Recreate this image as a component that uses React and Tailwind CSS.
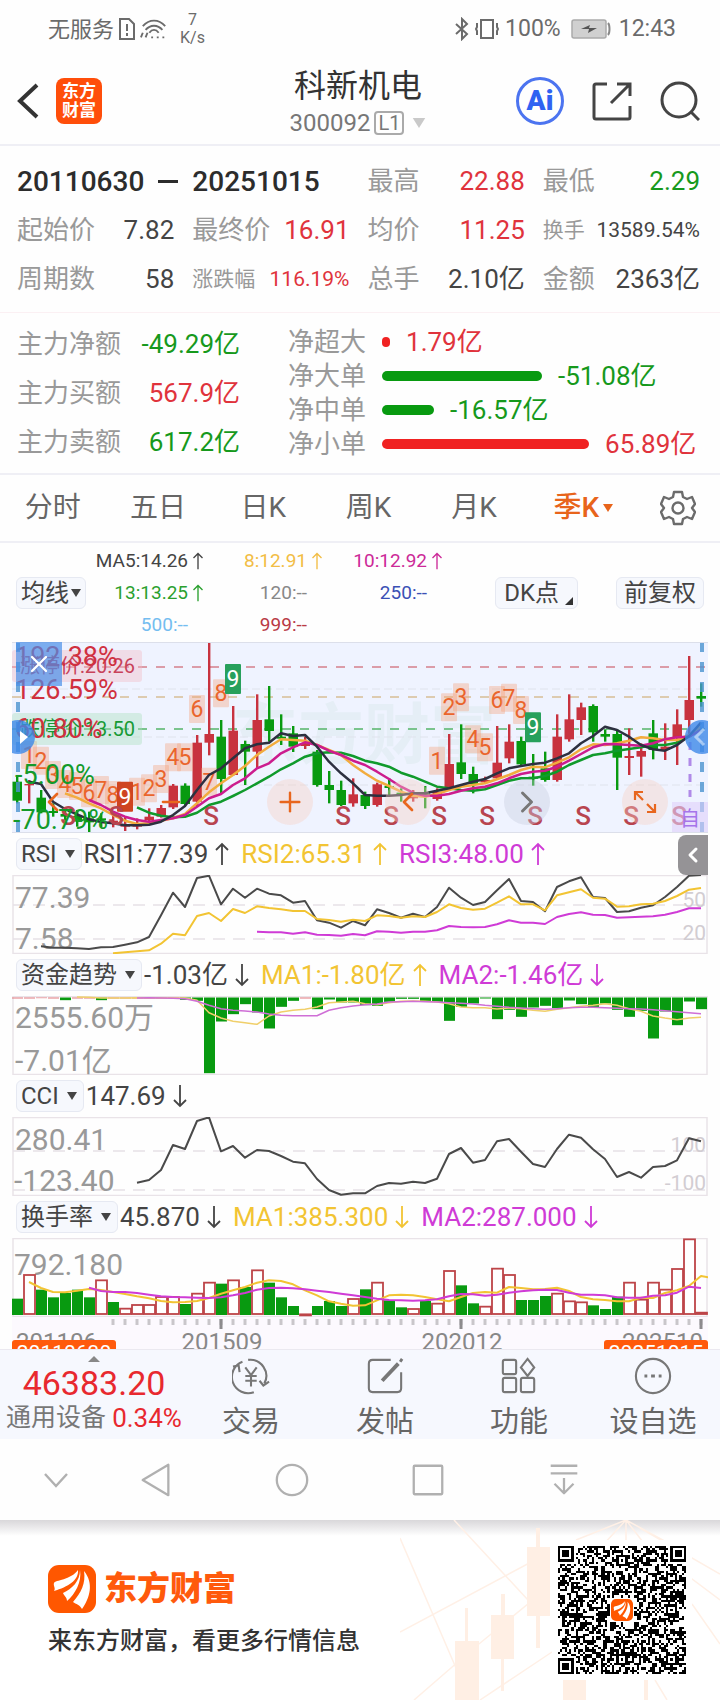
import { ChevronLeft, ChevronRight, Plus, Minus, X } from "lucide-react";

const GREEN = "#089a10";
const RED = "#c8323f";
const YELLOW = "#f2c433";
const PURPLE = "#cf3bd6";

// chart data is kept at 3 units per pixel, one column every 12px
const STEP = 12;
const cx = (i) => 5 + STEP * i;

const toPoints = (values, start, top) =>
  values.map((v, i) => `${cx(start + i)},${((v - top) / 3).toFixed(1)}`).join(" ");

function Line({ values, start, top, color, width = 2 }) {
  return <polyline points={toPoints(values, start, top)} fill="none" stroke={color} strokeWidth={width} strokeLinejoin="round" />;
}

// [up, high, open/close top, open/close bottom, low]
const candles = [
  [0, 437, 455, 512, 520], [1, 450, 462, 466, 520], [0, 480, 503, 547, 550], [0, 520, 543, 549, 560],
  [0, 535, 552, 560, 572], [0, 540, 558, 575, 590], [0, 545, 565, 577, 607], [0, 550, 565, 571, 592],
  [1, 545, 572, 578, 592], [1, 560, 584, 590, 603], [1, 565, 584, 590, 598], [1, 535, 560, 570, 575],
  [1, 525, 534, 560, 563], [1, 462, 467, 532, 537], [0, 460, 467, 522, 525], [1, 315, 338, 515, 530],
  [1, 36, 312, 338, 376], [0, 270, 320, 447, 490], [1, 228, 302, 435, 437], [0, 332, 342, 365, 465],
  [1, 193, 270, 365, 415], [0, 168, 268, 303, 335], [0, 253, 320, 326, 345], [0, 288, 310, 350, 366],
  [1, 320, 340, 348, 357], [0, 360, 365, 465, 470], [0, 423, 465, 480, 520], [0, 452, 480, 525, 528],
  [1, 445, 493, 520, 530], [0, 485, 495, 528, 537], [1, 458, 463, 525, 530], [0, 445, 468, 474, 495],
  [0, 475, 488, 495, 515], [1, 480, 500, 505, 515], [0, 468, 490, 497, 535], [1, 475, 485, 507, 512],
  [1, 312, 402, 475, 480], [0, 283, 397, 432, 447], [0, 410, 432, 462, 490], [1, 440, 450, 457, 462],
  [1, 288, 398, 445, 450], [1, 283, 335, 385, 400], [0, 320, 333, 403, 405], [0, 372, 440, 446, 467],
  [0, 365, 415, 450, 455], [1, 253, 320, 450, 455], [1, 193, 268, 328, 335], [1, 218, 232, 270, 315],
  [0, 223, 228, 307, 335], [0, 298, 312, 320, 335], [0, 298, 312, 383, 480], [1, 295, 378, 384, 435],
  [1, 340, 363, 380, 440], [0, 270, 310, 360, 388], [1, 280, 350, 360, 390], [1, 238, 283, 322, 405],
  [1, 78, 210, 270, 320], [0, 160, 198, 206, 230],
];

const ma5 = [455, 462, 515, 537, 553, 568, 576, 580, 586, 586, 584, 575, 555, 528, 480, 435, 415, 385, 355, 343, 338, 310, 318, 315, 350, 395, 430, 460, 495, 497, 497, 495, 490, 490, 482, 475, 465, 455, 447, 430, 415, 408, 402, 398, 385, 370, 340, 318, 290, 300, 320, 345, 358, 362, 345, 318, 278];
const ma8 = [490, 503, 520, 535, 555, 572, 582, 580, 572, 565, 552, 520, 487, 460, 435, 408, 375, 350, 328, 330, 332, 345, 360, 375, 405, 430, 452, 468, 485, 497, 500, 492, 480, 470, 465, 460, 448, 435, 420, 410, 412, 398, 382, 358, 343, 345, 340, 332, 322, 325, 330, 330, 315, 290];
const ma10 = [510, 525, 545, 560, 570, 575, 570, 565, 555, 530, 505, 492, 465, 445, 415, 400, 370, 352, 337, 345, 362, 375, 392, 405, 425, 447, 470, 488, 497, 497, 492, 482, 475, 470, 460, 445, 432, 425, 422, 410, 392, 372, 352, 342, 343, 345, 347, 340, 328, 322, 320, 300];
const ma13 = [532, 548, 557, 562, 560, 548, 525, 515, 498, 480, 460, 440, 418, 400, 380, 370, 367, 368, 378, 392, 400, 410, 428, 440, 455, 470, 475, 480, 482, 478, 465, 452, 445, 445, 438, 425, 405, 390, 375, 370, 362, 357, 352, 345, 345, 338, 320, 295];

// nine-turn counters: [digit, column, centre y]
const counters = [
  [1, 1, 375], [2, 2, 392], [3, 3, 435], [4, 4, 462], [5, 5, 468], [6, 6, 490], [7, 7, 480], [8, 8, 495],
  [1, 10, 485], [2, 11, 475], [3, 12, 447], [4, 13, 382], [5, 14, 382], [6, 15, 237], [7, 16, 455], [8, 17, 190],
  [1, 35, 392], [2, 36, 232], [3, 37, 202], [4, 38, 328], [5, 39, 352], [6, 40, 210], [7, 41, 203], [8, 42, 240],
];
const nines = [[9, 500, "#cf4420"], [18, 147, "#27a05c"], [43, 292, "#27a05c"]];
const sells = [56, 104, 199, 331, 379, 427, 475, 523, 571, 619, 667];

const rsi1 = [348, 352, 352, 354, 356, 351, 350, 343, 336, 320, 255, 187, 230, 143, 136, 222, 175, 202, 175, 190, 195, 217, 212, 270, 277, 292, 272, 285, 237, 248, 262, 250, 260, 230, 172, 202, 224, 215, 180, 146, 212, 215, 243, 170, 153, 141, 200, 203, 245, 243, 232, 225, 200, 170, 136, 134];
const rsi2 = [369, 366, 363, 360, 340, 310, 315, 257, 248, 272, 236, 248, 228, 233, 237, 242, 242, 266, 269, 274, 268, 272, 255, 257, 262, 258, 260, 245, 222, 233, 238, 235, 217, 198, 222, 222, 240, 195, 186, 177, 202, 205, 229, 228, 222, 220, 212, 197, 178, 173];
const rsi3 = [304, 306, 306, 310, 306, 313, 314, 316, 311, 315, 303, 304, 307, 304, 304, 300, 287, 290, 291, 290, 282, 270, 277, 277, 281, 260, 251, 246, 253, 254, 262, 261, 259, 258, 253, 245, 234, 234];

const fundBars = [508, 508, 507, 508, 513, 508, 508, 513, 508, 508, 508, 508, 508, 508, 512, 515, 732, 577, 555, 525, 550, 598, 533, 515, 508, 540, 511, 520, 520, 528, 530, 518, 509, 509, 518, 518, 575, 533, 523, 508, 570, 542, 563, 535, 530, 537, 514, 525, 535, 523, 542, 563, 545, 628, 547, 588, 517, 540];
const fundRed = [0, 1, 2, 3, 5, 6, 8, 9, 10, 11, 12, 13, 24];
const fundMa1 = [505, 506, 508, 508, 508, 507, 508, 508, 508, 508, 515, 552, 568, 578, 582, 587, 562, 550, 545, 542, 535, 522, 520, 518, 525, 528, 522, 518, 517, 518, 520, 525, 535, 537, 537, 541, 538, 540, 545, 548, 542, 537, 533, 530, 525, 530, 540, 548, 562, 568, 573, 568, 566];
const fundMa2 = [508, 507, 508, 509, 510, 518, 530, 540, 545, 547, 550, 556, 560, 561, 561, 561, 545, 537, 532, 528, 526, 520, 519, 518, 519, 520, 522, 524, 526, 530, 533, 536, 538, 540, 542, 540, 537, 536, 536, 537, 539, 540, 541, 543, 546, 549, 552, 555];

const cci = [308, 300, 270, 195, 207, 123, 112, 214, 198, 233, 210, 213, 228, 245, 250, 297, 330, 344, 340, 340, 318, 309, 311, 305, 309, 296, 222, 204, 248, 240, 184, 177, 215, 252, 261, 207, 164, 173, 208, 237, 291, 276, 293, 261, 258, 241, 175, 184];

const turnTops = [660, 586, 633, 656, 643, 633, 656, 602, 670, 687, 676, 676, 652, 652, 676, 642, 609, 615, 602, 625, 572, 612, 656, 682, 704, 682, 667, 682, 658, 632, 609, 665, 686, 688, 667, 672, 574, 620, 674, 681, 567, 586, 664, 664, 652, 642, 665, 668, 680, 691, 654, 609, 660, 609, 630, 568, 479, 699];
const turnGreen = [0, 2, 3, 4, 5, 6, 8, 14, 17, 19, 21, 22, 23, 25, 26, 27, 29, 31, 32, 34, 37, 38, 42, 43, 44, 48, 49, 50];
const turnMa1 = [610, 628, 640, 641, 636, 631, 634, 640, 646, 653, 659, 667, 671, 670, 667, 658, 645, 635, 625, 612, 605, 607, 617, 635, 650, 668, 675, 681, 680, 665, 650, 648, 650, 655, 662, 668, 655, 643, 640, 642, 625, 628, 632, 631, 627, 637, 655, 662, 664, 668, 668, 657, 658, 643, 635, 622, 592, 598];
const turnMa2 = [627, 637, 640, 640, 643, 648, 653, 655, 656, 657, 658, 656, 650, 643, 633, 628, 627, 629, 632, 636, 640, 645, 650, 655, 660, 664, 665, 666, 665, 662, 653, 646, 647, 651, 648, 642, 638, 635, 633, 634, 642, 648, 648, 650, 656, 657, 657, 651, 650, 642, 624, 628];

function Arrow({ down = false, className = "h-6 w-3.5" }) {
  return (
    <svg viewBox="0 0 14 24" className={className} fill="none" stroke="currentColor" strokeWidth="1.8">
      {down ? <path d="M7 1v21M1 16l6 6 6-6" /> : <path d="M7 23V2M1 8l6-6 6 6" />}
    </svg>
  );
}

function Caret({ className = "h-2 w-2.5" }) {
  return (
    <svg viewBox="0 0 10 8" className={className} fill="currentColor">
      <path d="M0 0h10L5 8z" />
    </svg>
  );
}

function StatusBar() {
  return (
    <div className="flex h-[58px] items-center justify-between pr-11 pl-12 text-[23px] text-[#6b6b6b]">
      <div className="flex items-center gap-1">
        <span className="text-[22px]">无服务</span>
        <svg viewBox="0 0 18 22" className="h-[22px] w-[18px]" fill="none" stroke="currentColor" strokeWidth="2">
          <path d="M2 1h9l5 5v15H2z" />
          <path d="M9 6v7M9 15v3" />
        </svg>
        <svg viewBox="0 0 30 22" className="h-[22px] w-[28px]" fill="none" stroke="currentColor" strokeWidth="2">
          <path d="M3 8c7-8 17-8 24 0M6 12c5-6 13-6 18 0M10 15c3-4 7-4 10 0" />
          <path d="M3 15l-2 5M8 15l-2 5M12 20h2M18 20h2M24 20h2" />
        </svg>
        <span className="ml-2 flex flex-col items-center text-[16px] leading-[18px]">
          <span>7</span>
          <span>K/s</span>
        </span>
      </div>
      <div className="flex items-center gap-1">
        <svg viewBox="0 0 14 24" className="h-6 w-3.5" fill="none" stroke="currentColor" strokeWidth="2">
          <path d="M1 7l11 10-5 5V2l5 5L1 17" />
        </svg>
        <svg viewBox="0 0 28 22" className="h-[22px] w-7" fill="none" stroke="currentColor" strokeWidth="2">
          <path d="M8 2h12v18H8zM4 5v4l-1 2 1 2v4M24 5v4l1 2-1 2v4" />
        </svg>
        <span>100%</span>
        <svg viewBox="0 0 40 20" className="mr-1 ml-1.5 h-5 w-10">
          <rect x="1" y="1" width="34" height="18" rx="2" fill="#d0d0d0" stroke="#aaa" strokeWidth="1.5" />
          <path d="M37 4c2 2 2 10 0 12" stroke="#888" strokeWidth="2" fill="none" />
          <path d="M10 10l9-4-1 3h8l-9 5 1-4z" fill="#555" />
        </svg>
        <span>12:43</span>
      </div>
    </div>
  );
}

function Header() {
  return (
    <header className="grid h-[88px] grid-cols-[1fr_auto_1fr] items-center border-b-2 border-[#efeff5] pr-5 pl-4">
      <div className="flex items-center gap-4">
        <button aria-label="返回">
          <svg viewBox="0 0 24 36" className="h-9 w-6" fill="none" stroke="#333" strokeWidth="4">
            <path d="M21 2L4 18l17 16" />
          </svg>
        </button>
        <a href="#home" className="grid h-[46px] w-[46px] place-content-center rounded-lg bg-[#ff4e0a] text-center text-[17px] leading-[19px] font-bold text-white">
          <span>东方</span>
          <span>财富</span>
        </a>
      </div>
      <div className="flex flex-col items-center pt-1">
        <h1 className="text-[32px] leading-10 text-[#333]">科新机电</h1>
        <button className="flex items-center gap-1 text-[24px] leading-[34px] text-[#777]">
          <span>300092</span>
          <span className="rounded border-2 border-[#aaa] px-0.5 text-[20px] leading-5">L1</span>
          <Caret className="ml-1 h-2.5 w-3.5 text-[#c9c9c9]" />
        </button>
      </div>
      <div className="flex items-center justify-end gap-7">
        <button aria-label="智能助手" className="h-12 w-12 rounded-full border-3 border-[#4c74f0] text-[28px] leading-none font-black text-[#2f62f2]">
          Ai
        </button>
        <button aria-label="分享">
          <svg viewBox="0 0 40 40" className="h-10 w-10" fill="none" stroke="#444" strokeWidth="3">
            <path d="M15 3H4q-2 0-2 2v31q0 2 2 2h32q2 0 2-2V25M25 3h13v12M38 3L19 22" />
          </svg>
        </button>
        <button aria-label="搜索">
          <svg viewBox="0 0 40 40" className="h-10 w-10" fill="none" stroke="#444" strokeWidth="3">
            <circle cx="19" cy="19" r="17" />
            <path d="M31 31l8 8" />
          </svg>
        </button>
      </div>
    </header>
  );
}

const stats = [
  ["最高", "22.88", "text-[#e0333c]"],
  ["最低", "2.29", "text-[#16991c]"],
  ["起始价", "7.82", "text-[#444]"],
  ["最终价", "16.91", "text-[#e0333c]"],
  ["均价", "11.25", "text-[#e0333c]"],
  ["换手", "13589.54%", "text-[#444]", true],
  ["周期数", "58", "text-[#444]"],
  ["涨跌幅", "116.19%", "text-[#e0333c]", true],
  ["总手", "2.10亿", "text-[#444]"],
  ["金额", "2363亿", "text-[#444]"],
];

function Stats() {
  return (
    <section className="grid grid-cols-4 gap-x-[18px] border-b border-[#fbf0f3] pt-[11px] pr-5 pb-2 pl-[17px]">
      <div className="col-span-2 flex h-[49px] items-center gap-3.5 text-[28px] font-medium text-[#2c2c2c]">
        <span>20110630</span>
        <span className="h-[3px] w-5 bg-[#2c2c2c]" />
        <span>20251015</span>
      </div>
      {stats.map(([label, value, color, small]) => (
        <div key={label} className={`flex h-[49px] items-center justify-between whitespace-nowrap ${small ? "text-[21px]" : "text-[26px]"}`}>
          <span className="text-[#999]">{label}</span>
          <span className={color}>{value}</span>
        </div>
      ))}
    </section>
  );
}

const mainFlow = [
  ["主力净额", "-49.29亿", "text-[#16991c]"],
  ["主力买额", "567.9亿", "text-[#e0333c]"],
  ["主力卖额", "617.2亿", "text-[#16991c]"],
];
const netFlow = [
  ["净超大", "1.79亿", "w-2 bg-[#f02222]", "text-[#e0333c]"],
  ["净大单", "-51.08亿", "w-40 bg-[#089a10]", "text-[#16991c]"],
  ["净中单", "-16.57亿", "w-[52px] bg-[#089a10]", "text-[#16991c]"],
  ["净小单", "65.89亿", "w-[207px] bg-[#f02222]", "text-[#e0333c]"],
];

function MoneyFlow() {
  return (
    <section className="flex gap-12 border-b-2 border-[#efeff5] pt-3 pr-4 pb-3 pl-[17px] text-[26px]">
      <div className="flex w-[223px] flex-col justify-between">
        {mainFlow.map(([label, value, color]) => (
          <div key={label} className="flex h-[38px] items-center justify-between">
            <span className="text-[#999]">{label}</span>
            <span className={color}>{value}</span>
          </div>
        ))}
      </div>
      <div className="flex-1">
        {netFlow.map(([label, value, bar, color]) => (
          <div key={label} className="flex h-[34px] items-center gap-4">
            <span className="text-[#999]">{label}</span>
            <span className={`h-2.5 rounded-full ${bar}`} />
            <span className={color}>{value}</span>
          </div>
        ))}
      </div>
    </section>
  );
}

function Tabs() {
  return (
    <nav className="flex h-[68px] items-center border-b-2 border-[#efeff5] text-[28px] text-[#666]">
      {["分时", "五日", "日K", "周K", "月K"].map((t) => (
        <button key={t} className="flex-1">{t}</button>
      ))}
      <button className="flex flex-1 items-center justify-center gap-1 pl-1 font-medium text-[#e8641b]">
        季K
        <Caret className="h-2.5 w-2.5" />
      </button>
      <button aria-label="设置" className="flex w-[84px] justify-center">
        <svg viewBox="0 0 36 36" className="h-9 w-9" fill="none" stroke="#6b6b6b" strokeWidth="2.4" strokeLinejoin="round">
          <path d="M14 2h8l1 5 4 2 5-2 3 7-3 4 3 4-3 7-5-2-4 2-1 5h-8l-1-5-4-2-5 2-3-7 3-4-3-4 3-7 5 2 4-2z" />
          <circle cx="18" cy="18" r="5.5" />
        </svg>
      </button>
    </nav>
  );
}

const averages = [
  ["MA5:14.26", "text-[#444]", true], ["8:12.91", "text-[#f2bd45]", true], ["10:12.92", "text-[#cc2a98]", true],
  ["13:13.25", "text-[#2aa02e]", true], ["120:--", "text-[#888]"], ["250:--", "text-[#3b50b5]"],
  ["500:--", "text-[#74bdf0]"], ["999:--", "text-[#b93a45]"],
];

const chip = "flex items-center rounded-md border border-[#e6e9f2] bg-[#f6f8fd] whitespace-nowrap text-[#444]";

function Averages() {
  return (
    <section className="flex items-center justify-between px-4 pt-0.5 pb-px">
      <div className="flex items-center">
        <button className={`${chip} h-8 gap-0.5 px-1 text-[24px]`}>
          均线
          <Caret />
        </button>
        <div className="grid grid-cols-[118px_119px_120px] text-[19px]">
          {averages.map(([text, color, up]) => (
            <div key={text} className={`flex h-8 items-center justify-end ${color}`}>
              {text}
              <span className="w-4 pl-1">{up && <Arrow className="h-[18px] w-3" />}</span>
            </div>
          ))}
        </div>
      </div>
      <div className="flex gap-[38px]">
        <button className={`${chip} h-8 gap-1.5 pr-1 pl-2 text-[24px]`}>
          DK点
          <svg viewBox="0 0 8 8" className="mt-4 h-2 w-2">
            <path d="M8 0v8H0z" fill="#333" />
          </svg>
        </button>
        <button className={`${chip} h-8 px-[7px] text-[24px]`}>前复权</button>
      </div>
    </section>
  );
}

const tool = "grid h-[46px] w-[46px] place-items-center rounded-full";

function PriceChart() {
  return (
    <div className="relative mx-3">
      <svg viewBox="0 0 696 191" className="block h-auto w-full overflow-hidden bg-[#eff3ff]">
        <text x="220" y="116" fontSize="66" fontWeight="700" fill="#e5eef6">东方财富</text>
        <path d="M0 47H696M0 95H696M0 143H696" stroke="#dfe3ec" strokeDasharray="8 4" />
        <path d="M0 25H696" stroke="#d5808c" strokeWidth="1.5" strokeDasharray="9 9" />
        <path d="M0 55H696" stroke="#d8bf96" strokeWidth="1.5" strokeDasharray="9 9" />
        <path d="M0 87H696" stroke="#55b56a" strokeWidth="1.5" strokeDasharray="9 9" />
        {candles.map(([up, high, top, bottom, low], i) => (
          <g key={i} fill={up ? RED : GREEN}>
            <rect x={cx(i) - 1} y={(high - 36) / 3} width="2.4" height={(low - high) / 3} />
            <rect x={cx(i) - 4.5} y={(top - 36) / 3} width="9.5" height={(bottom - top) / 3} />
          </g>
        ))}
        {counters.map(([n, col, y], i) => (
          <g key={i}>
            <rect x={cx(col) - 8} y={(y - 36) / 3 - 14} width="16" height="28" rx="1" fill="#f59a70" fillOpacity="0.35" />
            <text x={cx(col)} y={(y - 36) / 3 + 8} fontSize="23" textAnchor="middle" fill="#ea652c">{n}</text>
          </g>
        ))}
        {nines.map(([col, y, color]) => (
          <g key={col}>
            <rect x={cx(col) - 8} y={(y - 36) / 3 - 15} width="16" height="30" rx="1" fill={color} />
            <text x={cx(col)} y={(y - 36) / 3 + 8} fontSize="23" textAnchor="middle" fill="#fff">9</text>
          </g>
        ))}
        <Line values={ma13} start={10} top={36} color="#109a2c" width={2.5} />
        <Line values={ma8} start={4} top={36} color="#f2ac3e" width={2.5} />
        <Line values={ma10} start={6} top={36} color="#cc1c8e" width={2.5} />
        <Line values={ma5} start={1} top={36} color="#2d3040" width={2.5} />
        {sells.map((x) => (
          <text key={x} x={x} y="183" fontSize="26" fontWeight="500" textAnchor="middle" fill="#b8444f">S</text>
        ))}

        <rect y="8" width="130" height="32" rx="3" fill="#f3b9c3" fillOpacity="0.4" />
        <text x="8" y="31" fontSize="20" fill="#c8435a">涨停价:20.26</text>
        <rect y="71" width="130" height="32" rx="3" fill="#aadfbb" fillOpacity="0.4" />
        <text x="8" y="94" fontSize="20" fill="#189a35">跌停价:13.50</text>
        <g fontSize="27" fill="#d0303f">
          <text x="3" y="24">192.38%</text>
          <text x="3" y="57">126.59%</text>
          <text x="3" y="96">60.80%</text>
        </g>
        <g fontSize="27" fill="#139a2a">
          <text x="3" y="142">-5.00%</text>
          <text x="1" y="187">-70.79%</text>
        </g>

        <path d="M6 0V191M690 0V191" stroke="#4b94cf" strokeWidth="4" strokeOpacity="0.8" strokeDasharray="10 10" />
        <path d="M678 100V155" stroke="#b08ae8" strokeWidth="3" strokeDasharray="8 8" />
        <rect x="660" y="160" width="36" height="30" fill="#e0d0fa" fillOpacity="0.6" />
        <text x="678" y="184" fontSize="20" textAnchor="middle" fill="#a675ea">自</text>
        <circle cx="690" cy="95" r="17" fill="#3d88e8" fillOpacity="0.8" />
        <path d="M692 87l-8 8 8 8" stroke="#fff" strokeOpacity="0.5" strokeWidth="3" fill="none" />
        <circle cx="6" cy="95" r="17" fill="#3d88e8" fillOpacity="0.8" />
        <path d="M8 89l8 6-8 7z" fill="#fff" />
        <path d="M0 .5H696M0 190.5H696" stroke="#dcdfea" />
      </svg>
      <button aria-label="关闭区间" className="absolute top-0 left-1 grid h-11 w-[46px] place-items-center bg-[#4a8fe8]/70 text-white">
        <X className="h-7 w-7" strokeWidth={2} />
      </button>
      <div className="absolute inset-x-0 bottom-2 flex justify-between pr-10 pl-[18px] text-[#e8661e]">
        <button aria-label="左移" className={tool}><ChevronLeft className="h-8 w-8" strokeWidth={2} /></button>
        <button aria-label="缩小" className={tool}><Minus className="h-7 w-7" strokeWidth={2} /></button>
        <button aria-label="放大" className={`${tool} bg-[#f7cfc4]/40`}><Plus className="h-8 w-8" strokeWidth={1.8} /></button>
        <button aria-label="后退" className={`${tool} bg-[#f7cfc4]/40`}><ChevronLeft className="h-8 w-8" strokeWidth={2} /></button>
        <button aria-label="前进" className={`${tool} bg-[#c9cede]/40 text-[#777]`}><ChevronRight className="h-9 w-9" strokeWidth={2} /></button>
        <button aria-label="全屏" className={`${tool} bg-[#f7cfc4]/40`}>
          <svg viewBox="0 0 24 24" className="h-6 w-6" fill="none" stroke="currentColor" strokeWidth="2.2">
            <path d="M2 10V2h8M2 2l8 8M22 14v8h-8M22 22l-8-8" />
          </svg>
        </button>
      </div>
    </div>
  );
}

function Indicator({ name, readings, children }) {
  return (
    <section className="mx-3">
      <div className="flex h-[42px] items-center pl-1 text-[26px] whitespace-nowrap">
        <button className={`${chip} mr-0.5 h-8 gap-2 pr-1.5 pl-1 text-[24px]`}>
          {name}
          <Caret />
        </button>
        {readings.map(([text, color, down]) => (
          <span key={text} className={`mr-3 flex items-center gap-[7px] ${color}`}>
            {text}
            <Arrow down={down} />
          </span>
        ))}
      </div>
      <svg viewBox="0 0 696 79" className="block h-auto w-full">
        <rect x="1" y="0.5" width="694" height="78" fill="none" stroke="#e9e3e8" strokeWidth="1.5" />
        {children}
      </svg>
    </section>
  );
}

const Dashes = ({ ys }) => ys.map((y) => <path key={y} d={`M1 ${y}H695`} stroke="#e6e1e6" strokeWidth="1.5" strokeDasharray="12 8" />);

function Indicators() {
  return (
    <>
      <div className="relative">
        <Indicator
          name="RSI"
          readings={[["RSI1:77.39", "text-[#444]"], ["RSI2:65.31", "text-[#f2c433]"], ["RSI3:48.00", "text-[#cf3bd6]"]]}
        >
          <Dashes ys={[30, 64]} />
          <text x="3" y="33" fontSize="30" fill="#999">77.39</text>
          <text x="3" y="74" fontSize="30" fill="#999">7.58</text>
          <g fontSize="21" fill="#d2cdd2" textAnchor="end">
            <text x="694" y="32">50</text>
            <text x="694" y="65">20</text>
          </g>
          <Line values={rsi1} start={2} top={134} color="#4a4a4a" />
          <Line values={rsi2} start={8} top={134} color={YELLOW} />
          <Line values={rsi3} start={20} top={134} color={PURPLE} />
        </Indicator>
        <button aria-label="展开侧栏" className="absolute top-0.5 right-3 grid h-10 w-[30px] place-items-center rounded-l-lg bg-[#959396] text-white">
          <ChevronLeft className="h-6 w-6" strokeWidth={3} />
        </button>
      </div>

      <Indicator
        name="资金趋势"
        readings={[["-1.03亿", "text-[#444]", true], ["MA1:-1.80亿", "text-[#f2c433]"], ["MA2:-1.46亿", "text-[#cf3bd6]", true]]}
      >
        <text x="3" y="32" fontSize="30" fill="#999">2555.60万</text>
        <text x="3" y="75" fontSize="30" fill="#999">-7.01亿</text>
        {fundBars.map((v, i) => (
          <rect key={i} x={cx(i) - 5} y="1.5" width="11" height={(v - 505) / 3} fill={fundRed.includes(i) ? "#e0797f" : "#089a10"} />
        ))}
        <Line values={fundMa1} start={5} top={502} color="#f0cf6a" width={1.5} />
        <Line values={fundMa2} start={10} top={502} color="#cf6fd6" width={1.5} />
      </Indicator>

      <Indicator name="CCI" readings={[["147.69", "text-[#444]", true]]}>
        <Dashes ys={[34, 73]} />
        <text x="3" y="33" fontSize="30" fill="#999">280.41</text>
        <text x="2" y="74" fontSize="30" fill="#999">-123.40</text>
        <g fontSize="21" fill="#d2cdd2" textAnchor="end">
          <text x="694" y="35">100</text>
          <text x="694" y="73">-100</text>
        </g>
        <Line values={cci} start={10} top={111} color="#4a4a4a" />
      </Indicator>

      <Indicator
        name="换手率"
        readings={[["45.870", "text-[#444]", true], ["MA1:385.300", "text-[#f2c433]", true], ["MA2:287.000", "text-[#cf3bd6]", true]]}
      >
        <text x="2" y="37" fontSize="30" fill="#999">792.180</text>
        {turnTops.map((v, i) =>
          turnGreen.includes(i) ? (
            <rect key={i} x={cx(i) - 5} y={(v - 478) / 3} width="11" height={(709 - v) / 3} fill="#089a10" />
          ) : (
            <rect key={i} x={cx(i) - 5} y={(v - 478) / 3 + 1} width="11" height={Math.max((706 - v) / 3 - 1, 1)} fill="#fff" stroke="#bd4448" strokeWidth="1.8" />
          ),
        )}
        <Line values={turnMa1} start={1} top={478} color={YELLOW} />
        <Line values={turnMa2} start={6} top={478} color={PURPLE} />
      </Indicator>
    </>
  );
}

function DateAxis() {
  const ticks = Array.from({ length: 50 }, (_, i) => i + 8);
  return (
    <div className="mx-3 overflow-hidden bg-[#fcf9fe]">
      <svg viewBox="0 0 696 32" className="block h-auto w-full">
        {ticks.map((i) => (
          <path key={i} d={`M${cx(i)} 2v6`} stroke="#c9c6ca" strokeWidth="3" />
        ))}
        {[17, 37, 57].map((i) => (
          <path key={i} d={`M${cx(i)} 2v10`} stroke="#8d8b8e" strokeWidth="3" />
        ))}
        <g fontSize="24" fill="#888">
          <text x="4" y="33">201106</text>
          <text x="210" y="33" textAnchor="middle">201509</text>
          <text x="450" y="33" textAnchor="middle">202012</text>
          <text x="691" y="33" textAnchor="end">202510</text>
        </g>
        <rect y="23" width="104" height="20" rx="3" fill="#ff5a0c" />
        <rect x="592" y="23" width="104" height="20" rx="3" fill="#ff5a0c" />
        <g fontSize="21" fill="#fff" textAnchor="middle">
          <text x="52" y="43">20110630</text>
          <text x="644" y="43">20251015</text>
        </g>
      </svg>
    </div>
  );
}

const actions = [
  ["交易", (
    <>
      <path d="M11 5A17 17 0 0 0 23 37M1 10l6-1 1 7M17 3a17 17 0 0 1 17 25M29 25l4 5 6-4" />
      <path d="M14 11l6 8 6-8M20 19v12M14 20h12M14 25h12" />
    </>
  )],
  ["发帖", (
    <>
      <path d="M26 3H7q-4 0-4 4v26q0 4 4 4h26q4 0 4-4V16" />
      <path d="M17 25L34 7" strokeWidth="4" />
      <path d="M36 5l2-3" strokeWidth="3" />
    </>
  )],
  ["功能", (
    <>
      <rect x="3" y="3" width="14" height="15" rx="2" />
      <rect x="3" y="22" width="14" height="15" rx="2" />
      <rect x="22" y="22" width="14" height="15" rx="2" />
      <path d="M29 2l7 9-7 9-7-9z" />
    </>
  )],
  ["设自选", (
    <>
      <circle cx="20" cy="20" r="18" />
      <path d="M11 20h3M18 20h4M26 20h3" strokeWidth="3" />
    </>
  )],
];

function BottomBar() {
  return (
    <nav className="flex h-[90px] border-t border-[#ebe9f0] bg-[#f6f8fe]">
      <button className="flex w-[184px] flex-col items-center pt-1.5 pl-1 whitespace-nowrap">
        <svg viewBox="0 0 12 6" className="h-1.5 w-3">
          <path d="M0 6l6-6 6 6z" fill="#888" />
        </svg>
        <span className="text-[34px] leading-[42px] text-[#e8292f]">46383.20</span>
        <span className="flex gap-1.5 text-[25px] leading-7 text-[#777]">
          通用设备 <span className="text-[26px] text-[#e8292f]">0.34%</span>
        </span>
      </button>
      {actions.map(([label, icon]) => (
        <button key={label} className="flex flex-1 flex-col items-center gap-[7px] pt-[7px] text-[29px] leading-[40px] text-[#666]">
          <svg viewBox="0 0 40 40" className="h-[38px] w-[38px] shrink-0" fill="none" stroke="#777" strokeWidth="2.2">
            {icon}
          </svg>
          {label}
        </button>
      ))}
    </nav>
  );
}

const navIcons = [
  ["返回键", <path key="p" d="M33 4v32L6 20z" />],
  ["主屏幕", <circle key="p" cx="20" cy="20" r="16" />],
  ["最近任务", <rect key="p" x="5" y="5" width="30" height="30" rx="1" />],
  ["下拉通知", <path key="p" d="M6 5h28M6 13h28M20 18v16M10 24l10 10 10-10" />],
];

function SystemNav() {
  return (
    <div className="flex h-[81px] items-center bg-[#fefefe] pr-22">
      <button aria-label="收起导航" className="flex w-22 justify-end pr-5">
        <svg viewBox="0 0 24 16" className="h-4 w-6" fill="none" stroke="#b0b0b0" strokeWidth="2.4">
          <path d="M1 2l11 12L23 2" />
        </svg>
      </button>
      {navIcons.map(([label, icon]) => (
        <button key={label} aria-label={label} className="flex flex-1 justify-center">
          <svg viewBox="0 0 40 40" className="h-[38px] w-[38px]" fill="none" stroke="#b0b0b0" strokeWidth="2.4" strokeLinejoin="round">
            {icon}
          </svg>
        </button>
      ))}
    </div>
  );
}

function LogoMark({ className }) {
  return (
    <svg viewBox="0 0 48 48" className={className}>
      <rect width="48" height="48" rx="11" fill="#ff5700" />
      <path d="M6 18C7 15 23 15 30 5C31 15 20 22 6 26C8 23 5 21 6 18z" fill="#fff" />
      <path d="M32 5C34 17 27 29 19 36C19 32 16 31 15 28C24 24 32 16 32 5z" fill="#fff" />
      <path d="M36 6C46 18 42 33 34 44C32 40 28 39 25 37C33 28 38 18 36 6z" fill="#fff" />
    </svg>
  );
}

const QR = 57;

function qrPath() {
  let seed = 20251015;
  const next = () => {
    seed = (seed * 1103515245 + 12345) % 2147483648;
    return seed / 2147483648;
  };
  const ring = (x, y, ox, oy, size) => {
    const dx = x - ox;
    const dy = y - oy;
    if (dx < 0 || dy < 0 || dx >= size || dy >= size) return null;
    const d = Math.max(Math.abs(dx - (size - 1) / 2), Math.abs(dy - (size - 1) / 2));
    return size === 7 ? d === 3 || d <= 1 : d !== 1;
  };
  let d = "";
  for (let y = 0; y < QR; y++) {
    for (let x = 0; x < QR; x++) {
      let on = next() > 0.5;
      const nearX = x < 8 || x > QR - 9;
      if ((nearX && y < 8) || (x < 8 && y > QR - 9)) on = false;
      if (x > 22 && x < 34 && y > 22 && y < 34) on = false;
      for (const [ox, oy] of [[0, 0], [50, 0], [0, 50]]) {
        on = ring(x, y, ox, oy, 7) ?? on;
      }
      for (const [ox, oy] of [[26, 4], [4, 26], [48, 26], [26, 48], [48, 48]]) {
        on = ring(x, y, ox, oy, 5) ?? on;
      }
      if (on) d += `M${x} ${y}h1v1h-1z`;
    }
  }
  return d;
}

function Footer() {
  return (
    <footer className="relative flex h-[180px] items-center justify-between overflow-hidden bg-white pr-7 pl-12">
      <div className="absolute inset-x-0 top-0 h-4 bg-gradient-to-b from-[#d9d7da] to-white" />
      <svg viewBox="0 0 320 180" className="absolute top-0 right-0 h-full">
        <g stroke="#fff0e6" strokeWidth="1.5" fill="none">
          <path d="M54 0l74 80M0 112L150 32M0 18l56 130M14 180l60-52 76-62M80 180l72-48M226 0l-50 20M226 0l-24 26M226 0v30M226 0l20 26M226 0l44 24M240 8l80 46M292 84l28 40M255 160l12 20M240 20l80 60" />
        </g>
        <g fill="#ffefe4">
          <path d="M65 88h3v33h11v59H55v-59h10zM101 74h4v21h9v44h-10v32h-3v-32H91V95h10zM136 8h4v19h10v69h-10v32h-4V96h-9V27h9zM163 160h23v20h-23zM244 160h4v20h-4z" />
        </g>
      </svg>
      <div className="relative pt-1">
        <div className="flex items-center gap-2">
          <LogoMark className="h-12 w-12" />
          <span className="text-[33px] leading-[48px] font-black text-[#ff5a0c]">东方财富</span>
        </div>
        <p className="mt-2.5 text-[24px] leading-9 font-medium text-[#333]">来东方财富，看更多行情信息</p>
      </div>
      <div className="relative grid h-[140px] w-[140px] place-items-center bg-white">
        <svg viewBox={`0 0 ${QR} ${QR}`} className="h-32 w-32" shapeRendering="crispEdges">
          <path d={qrPath()} fill="#000" />
        </svg>
        <LogoMark className="absolute h-[22px] w-[22px]" />
      </div>
    </footer>
  );
}

export default function App() {
  return (
    <div className="w-full bg-[#fefefe] font-[Roboto,'Noto_Sans_CJK_SC',sans-serif]">
      <StatusBar />
      <Header />
      <Stats />
      <MoneyFlow />
      <Tabs />
      <Averages />
      <PriceChart />
      <Indicators />
      <DateAxis />
      <BottomBar />
      <SystemNav />
      <Footer />
    </div>
  );
}
